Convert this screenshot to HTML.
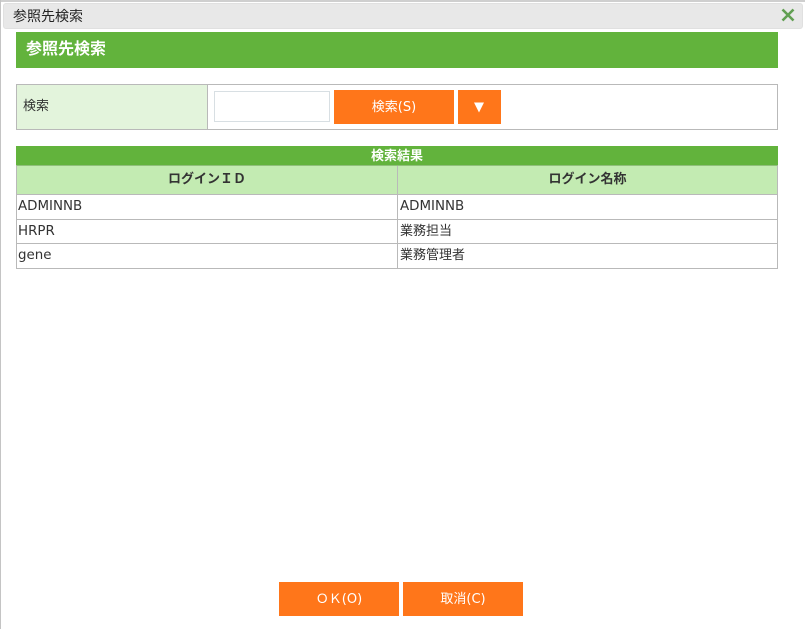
<!DOCTYPE html>
<html lang="ja"><head><meta charset="utf-8"><title>参照先検索</title>
<style>
html,body{margin:0;padding:0;background:#fff}
body{position:relative;width:805px;height:629px;overflow:hidden;font-family:"DejaVu Sans","Noto Sans CJK JP",sans-serif;font-size:13px;color:#333}
.a{position:absolute;box-sizing:border-box}
.t{white-space:nowrap;line-height:18px}
.btn{background:#ff761a;color:#fff;text-align:center;font-size:13px;height:34px;line-height:35px}
</style></head><body>
<div class="a" style="left:0;top:0;width:805px;height:2px;background:#cfcfcf"></div>
<div class="a" style="left:0;top:0;width:1px;height:629px;background:#c4c4c4"></div>
<div class="a" style="left:3px;top:3px;width:800px;height:26px;background:#e8e8e8;border:1px solid #e0e0e0;border-radius:3px"></div>
<div class="a t" style="left:13px;top:8px;font-size:14px;color:#222">参照先検索</div>
<svg class="a" style="left:781px;top:8px" width="14" height="14" viewBox="0 0 14 14"><path d="M1.5 1.5L12.5 12.5M12.5 1.5L1.5 12.5" stroke="#619f52" stroke-width="2.6" fill="none"/></svg>

<div class="a" style="left:16px;top:32px;width:762px;height:36px;background:#62b33c"></div>
<div class="a t" style="left:26px;top:40px;font-size:16px;font-weight:bold;color:#fff">参照先検索</div>

<div class="a" style="left:16px;top:84px;width:762px;height:46px;border:1px solid #b9b9b9"></div>
<div class="a" style="left:17px;top:85px;width:191px;height:44px;background:#e3f4dc;border-right:1px solid #b9b9b9"></div>
<div class="a t" style="left:23px;top:98px">検索</div>
<div class="a" style="left:214px;top:91px;width:116px;height:31px;background:#fff;border:1px solid #d8dfe3"></div>
<div class="a btn" style="left:334px;top:90px;width:120px">検索(S)</div>
<div class="a btn" style="left:458px;top:90px;width:43px"></div>
<svg class="a" style="left:473px;top:102px" width="12" height="11" viewBox="0 0 12 11"><path d="M1 0.5H11L6 10.5Z" fill="#fff"/></svg>

<div class="a" style="left:16px;top:146px;width:762px;height:19px;background:#62b33c"></div>
<div class="a t" style="left:16px;top:148px;width:762px;text-align:center;font-weight:bold;color:#fff;font-size:13px">検索結果</div>
<div class="a" style="left:16px;top:165px;width:762px;height:104px;border:1px solid #b9b9b9;border-top:1px solid #8fbf7a"></div>
<div class="a" style="left:17px;top:166px;width:760px;height:28px;background:#c3ebb2"></div>
<div class="a" style="left:16px;top:194px;width:762px;height:1px;background:#b9b9b9"></div>
<div class="a" style="left:16px;top:219px;width:762px;height:1px;background:#b9b9b9"></div>
<div class="a" style="left:16px;top:243px;width:762px;height:1px;background:#b9b9b9"></div>
<div class="a" style="left:397px;top:166px;width:1px;height:102px;background:#b9b9b9"></div>
<div class="a t" style="left:17px;top:171px;width:380px;text-align:center;font-weight:bold;font-size:13px;color:#333">ログインＩＤ</div>
<div class="a t" style="left:398px;top:171px;width:379px;text-align:center;font-weight:bold;font-size:13px;color:#333">ログイン名称</div>
<div class="a t" style="left:18px;top:198px;font-size:13.4px">ADMINNB</div>
<div class="a t" style="left:400px;top:198px;font-size:13.4px">ADMINNB</div>
<div class="a t" style="left:18px;top:223px;font-size:13.4px">HRPR</div>
<div class="a t" style="left:400px;top:223px">業務担当</div>
<div class="a t" style="left:18px;top:247px;font-size:13.4px">gene</div>
<div class="a t" style="left:400px;top:247px">業務管理者</div>

<div class="a btn" style="left:279px;top:582px;width:120px">ＯＫ(O)</div>
<div class="a btn" style="left:403px;top:582px;width:120px">取消(C)</div>
</body></html>
